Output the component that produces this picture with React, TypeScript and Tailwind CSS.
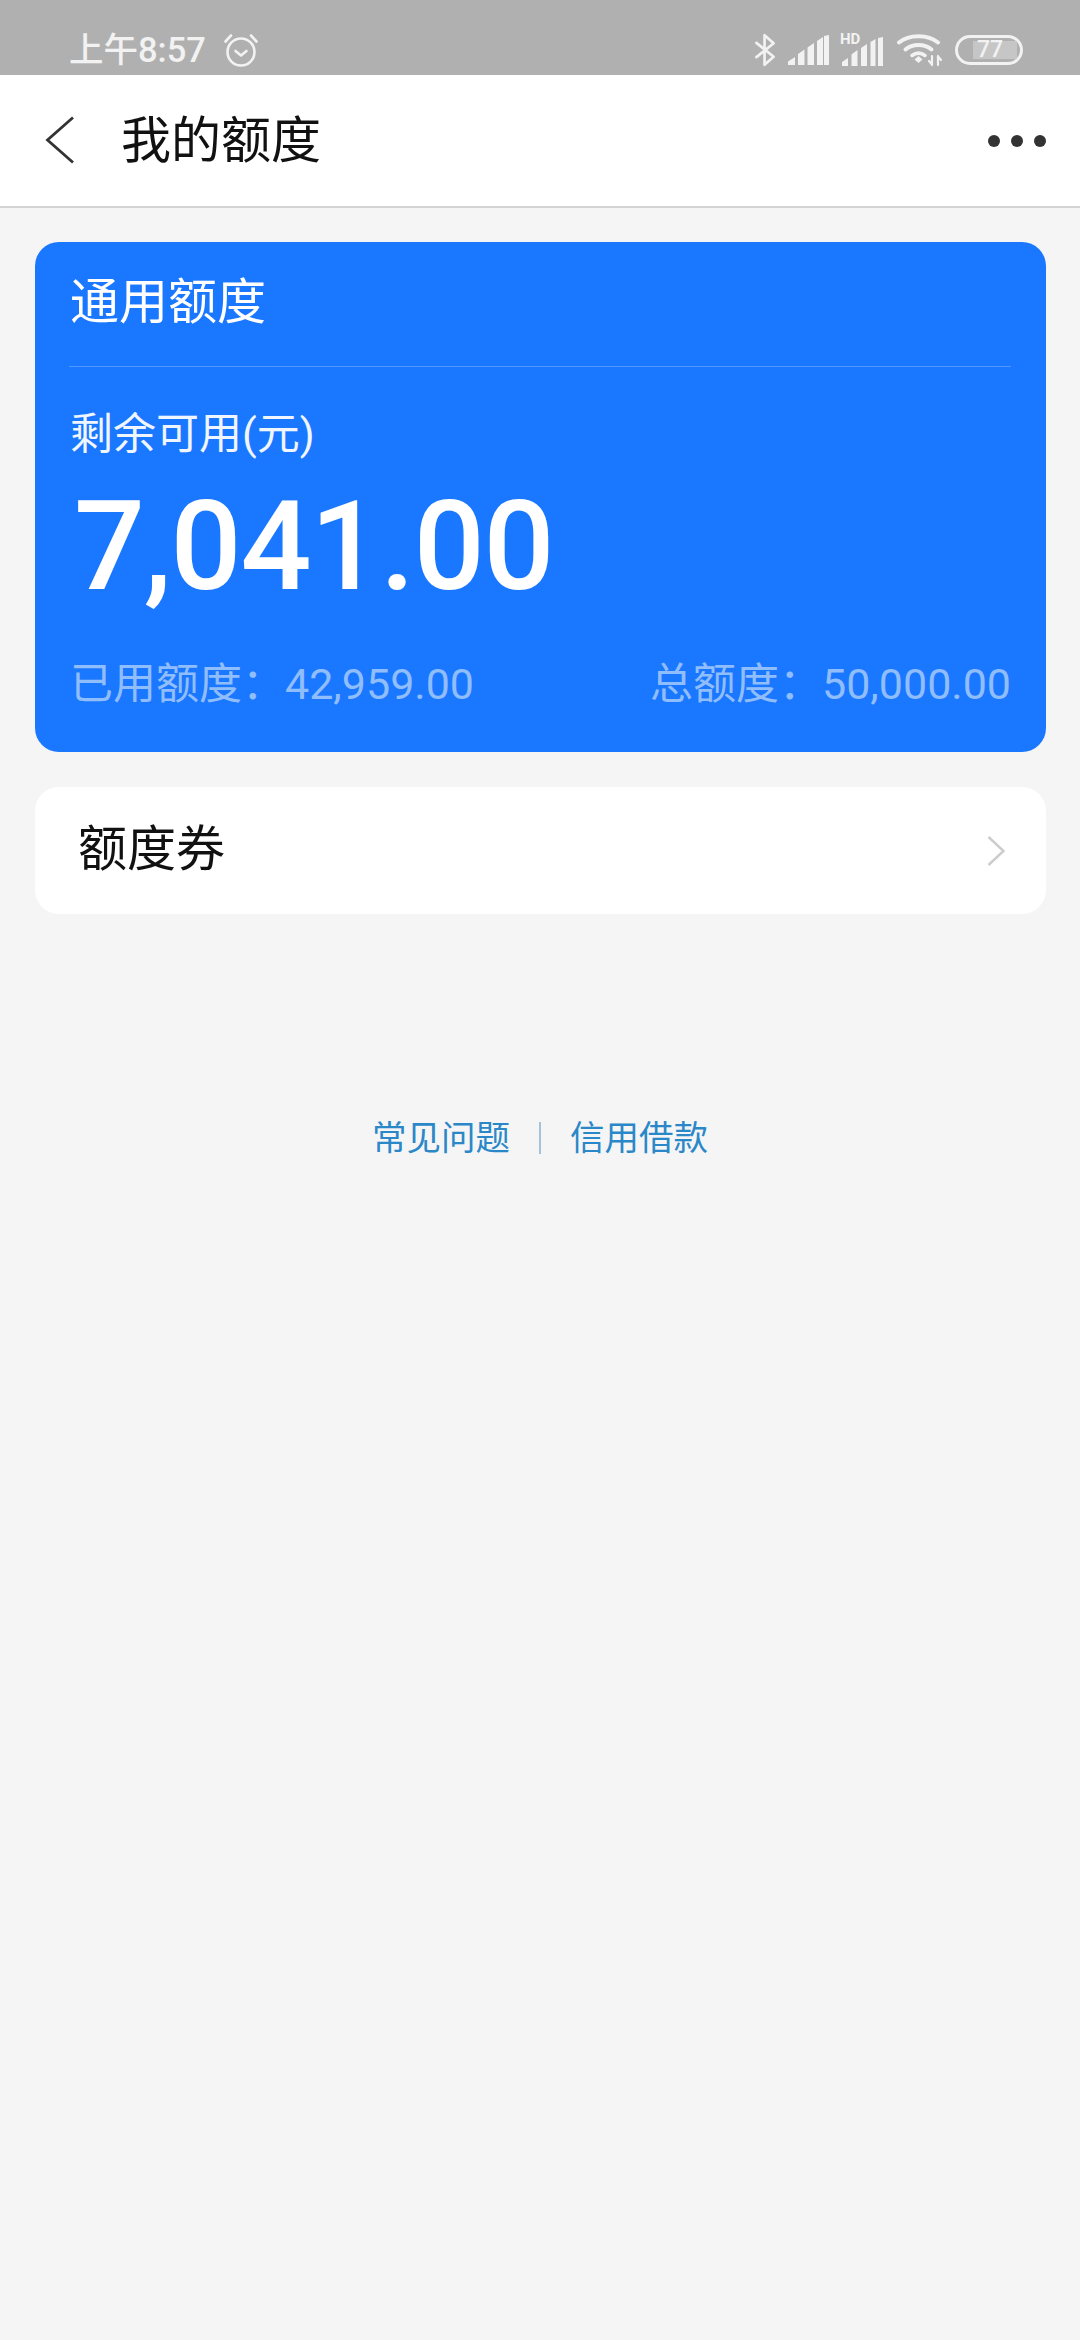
import React from 'react';

const FONT = { fontFamily: 'Roboto, "Noto Sans CJK SC", sans-serif' };

// status bar icons
const AlarmIcon = () => (
  <svg width="36" height="36" viewBox="0 0 36 36" fill="none" stroke="#f2f2f2" strokeWidth="2.6" strokeLinecap="round" strokeLinejoin="round">
    <circle cx="18" cy="20" r="13.5" />
    <path d="M12.5 19l5.5 4.5 5.5-4.5" />
    <path d="M2.5 9.5 8 3.5M33.5 9.5 28 3.5" />
  </svg>
);

const BluetoothIcon = () => (
  <svg width="21" height="36" viewBox="0 0 22 36" fill="none" stroke="#f2f2f2" strokeWidth="2.8" strokeLinejoin="round" strokeLinecap="round">
    <path d="M1.5 10.5 19.5 25 10 33.5V2.5L19.5 11 1.5 25.5" />
  </svg>
);

const SignalIcon = () => (
  <svg width="41" height="30" viewBox="0 0 41 30" fill="#f2f2f2">
    <path d="M0 30v-3.5L7 22v8zM10 30V19l6.500-4.500V30zM19.500 30V12.500L26 8V30zM29 30V6l6-4v28zM36 30V1L41 0v30z" />
  </svg>
);

const HdSignalIcon = () => (
  <div className="relative h-[32px] w-[42px]">
    <span className="absolute left-[-1px] top-[-3px] text-[15px] font-bold leading-[16px] text-[#f2f2f2]">HD</span>
    <svg className="absolute bottom-0 left-0" width="42" height="29" viewBox="0 0 42 29" fill="#f2f2f2">
      <path d="M1 29v-4l6-4v8zM10.500 29V17.500l6-4.500V29zM20 29V11l6-4v22zM29.500 29V5l5-3v27zM37 29V1l5-1v29z" />
    </svg>
  </div>
);

const WifiIcon = () => (
  <svg width="46" height="34" viewBox="0 0 46 34" fill="none" stroke="#f2f2f2" strokeLinecap="round">
    <path d="M2 9.500C12 1 31 1 41 9.500" strokeWidth="4" />
    <path d="M8.500 16.500C15.500 10.500 27.500 10.500 34.500 16.500" strokeWidth="4" />
    <path d="M15 22.500C19 19.500 24 19.500 28 22.500" strokeWidth="3.600" />
    <path d="M17.500 26.500 21.500 23 25.500 26.500 21.500 30z" fill="#f2f2f2" stroke="none" />
    <path d="M35 23v9M41 23v9" strokeWidth="2.200" />
    <path d="M32 28l3 3.500M44 27l-3-3.500" strokeWidth="2.200" />
  </svg>
);

const Battery = () => (
  <div className="relative flex h-[30px] w-[68px] items-center rounded-full border-[3px] border-[#f2f2f2] pl-[15px]">
    <div className="h-[18px] w-[44px] shrink-0 bg-[#c6c6c6]" />
    <span className="absolute left-[19px] text-[23px] font-medium leading-[24px] text-[#f2f2f2]">77</span>
  </div>
);

const BackIcon = () => (
  <svg width="32" height="50" viewBox="0 0 32 50" fill="none" stroke="#333333" strokeWidth="2.800">
    <path d="M28 1.500 2.500 24 28 46.500" />
  </svg>
);

const ChevronRight = () => (
  <svg width="20" height="32" viewBox="0 0 20 32" fill="none" stroke="#cccccc" strokeWidth="2.400">
    <path d="M2.500 2 17.500 16 2.500 30" />
  </svg>
);

export default function App() {
  return (
    <div className="flex min-h-[2340px] flex-col bg-[#f5f5f6]" style={FONT}>
      {/* status bar */}
      <div className="flex h-[75px] items-center justify-between bg-[#b0b0b0] pl-[69px] pr-[57px] pt-[25px]">
        <div className="flex items-center gap-[17px]">
          <span className="text-[34.500px] font-medium leading-[42px] text-[#f2f2f2]">上午8:57</span>
          <AlarmIcon />
        </div>
        <div className="flex items-center gap-[12px]">
          <BluetoothIcon />
          <SignalIcon />
          <HdSignalIcon />
          <div className="ml-[2px]">
            <WifiIcon />
          </div>
          <Battery />
        </div>
      </div>

      {/* nav */}
      <div className="flex h-[133px] items-center justify-between border-b-2 border-[#d4d4d4] bg-white pl-[45px] pr-[34px]">
        <div className="flex items-center gap-[44px]">
          <BackIcon />
          <span className="text-[50px] leading-[60px] text-[#111111]">我的额度</span>
        </div>
        <div className="flex gap-[11px]">
          <div className="h-[12px] w-[12px] rounded-full bg-[#333333]" />
          <div className="h-[12px] w-[12px] rounded-full bg-[#333333]" />
          <div className="h-[12px] w-[12px] rounded-full bg-[#333333]" />
        </div>
      </div>

      <div className="flex flex-col gap-[35px] pl-[35px] pr-[34px] pt-[34px]">
        {/* quota card */}
        <div className="flex h-[510px] flex-col rounded-[24px] bg-[#1a77ff] pl-[34px] pr-[35px]">
          <div className="flex h-[125px] items-center border-b border-[#4f96ff] pb-[3px]">
            <span className="ml-[1px] text-[49px] leading-[60px] text-white">通用额度</span>
          </div>
          <div className="ml-[1px] mt-[42px] text-[43px] leading-[50px] text-[#f0f6ff]">剩余可用(元)</div>
          <div className="ml-[5px] mt-[25px] text-[125px] font-medium leading-[125px] tracking-[-1.200px] text-white">7,041.00</div>
          <div className="ml-[1px] mt-[50px] flex items-center justify-between text-[#90bdfb]">
            <span className="text-[43px] leading-[50px]">已用额度：42,959.00</span>
            <span className="text-[43px] leading-[50px]">总额度：50,000.00</span>
          </div>
        </div>

        {/* coupon row */}
        <div className="flex h-[127px] items-center justify-between rounded-[24px] bg-white pl-[43px] pr-[40px]">
          <span className="mt-[-2px] text-[49px] leading-[60px] text-[#111111]">额度券</span>
          <ChevronRight />
        </div>
      </div>

      {/* links */}
      <div className="mt-[202px] flex items-center justify-center gap-[29px] text-[34.500px] leading-[44px] text-[#2b88c8]">
        <span>常见问题</span>
        <div className="h-[32px] w-[2px] bg-[#a5c3d8]" />
        <span>信用借款</span>
      </div>
    </div>
  );
}
